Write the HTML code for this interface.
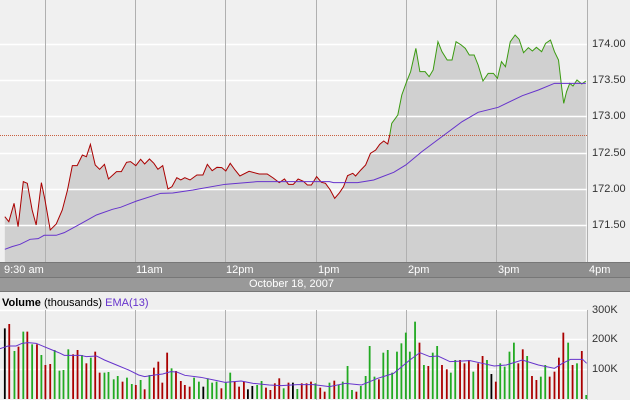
<!DOCTYPE html>
<html><head><meta charset="utf-8"><style>
body{margin:0;width:630px;height:400px;background:#efefef;overflow:hidden;font-family:"Liberation Sans",sans-serif;position:relative}
.t{position:absolute;font-size:11px;color:#333;line-height:12px}
.bar{position:absolute;left:0;width:630px;background:#8e8e8e;color:#fff;font-size:11px}
.bar span{position:absolute;top:1px}
</style></head><body>
<svg width="630" height="400" style="position:absolute;left:0;top:0">
<rect x="0" y="0" width="587" height="262" fill="#f0f0f0"/>
<g transform="scale(0.4018,0.3333)">
<path d="M12,650 22,665 35,610 45,680 58,545 68,550 80,630 90,675 103,548 112,600 125,690 140,672 155,630 168,570 180,497 192,497 205,465 215,470 225,433 237,495 248,508 260,493 270,537 290,515 302,515 315,487 325,485 338,497 350,478 360,492 372,477 383,490 393,508 405,497 418,567 428,560 440,533 450,540 460,533 473,540 490,525 505,525 516,493 528,512 540,502 552,503 562,513 573,490 585,510 597,528 620,514 645,522 665,522 680,534 695,548 708,537 718,553 730,553 742,537 755,544 765,555 775,555 788,530 800,547 810,550 822,570 833,595 845,578 855,560 865,527 878,520 885,528 898,510 910,495 922,460 935,450 945,433 955,423 965,432 975,370 990,345 1000,285 1012,245 1022,215 1035,145 1045,215 1058,215 1068,230 1078,210 1090,125 1100,155 1113,180 1125,180 1135,125 1148,135 1158,145 1168,165 1180,165 1190,195 1202,243 1215,220 1228,220 1238,235 1248,185 1258,200 1270,125 1282,105 1292,118 1303,158 1315,143 1325,153 1335,142 1348,155 1358,130 1370,120 1380,155 1390,180 1398,263 1403,310 1410,275 1418,250 1426,258 1436,240 1448,252 1458,243 L1458,786 L12,786Z" fill="#d0d0d0"/>
</g>
<g stroke="#fff" stroke-width="1.5">
<line x1="0" x2="587" y1="44.5" y2="44.5"/><line x1="0" x2="587" y1="80.5" y2="80.5"/><line x1="0" x2="587" y1="116.5" y2="116.5"/><line x1="0" x2="587" y1="153.5" y2="153.5"/><line x1="0" x2="587" y1="189.5" y2="189.5"/><line x1="0" x2="587" y1="225.5" y2="225.5"/>
<line x1="0" x2="587" y1="339.5" y2="339.5"/><line x1="0" x2="587" y1="369.5" y2="369.5"/><line x1="0" x2="587" y1="310.5" y2="310.5"/>
</g>
<g stroke="#b0b0b0" stroke-width="1">
<line x1="45.5" x2="45.5" y1="0" y2="262"/><line x1="135.5" x2="135.5" y1="0" y2="262"/><line x1="225.5" x2="225.5" y1="0" y2="262"/><line x1="316.5" x2="316.5" y1="0" y2="262"/><line x1="406.5" x2="406.5" y1="0" y2="262"/><line x1="496.5" x2="496.5" y1="0" y2="262"/><line x1="587.5" x2="587.5" y1="0" y2="262"/>
<line x1="45.5" x2="45.5" y1="310" y2="400"/><line x1="135.5" x2="135.5" y1="310" y2="400"/><line x1="225.5" x2="225.5" y1="310" y2="400"/><line x1="316.5" x2="316.5" y1="310" y2="400"/><line x1="406.5" x2="406.5" y1="310" y2="400"/><line x1="496.5" x2="496.5" y1="310" y2="400"/><line x1="587.5" x2="587.5" y1="310" y2="400"/>
</g>
<line x1="0" x2="587" y1="135.5" y2="135.5" stroke="#c86040" stroke-dasharray="1,1"/>
<g transform="scale(0.4018,0.3333)" fill="none" stroke-width="1" vector-effect="non-scaling-stroke">
<path vector-effect="non-scaling-stroke" stroke="#aa0000" d="M12,650 22,665 35,610 45,680 58,545 68,550 80,630 90,675 103,548 112,600 125,690 140,672 155,630 168,570 180,497 192,497 205,465 215,470 225,433 237,495 248,508 260,493 270,537 290,515 302,515 315,487 325,485 338,497 350,478 360,492 372,477 383,490 393,508 405,497 418,567 428,560 440,533 450,540 460,533 473,540 490,525 505,525 516,493 528,512 540,502 552,503 562,513 573,490 585,510 597,528 620,514 645,522 665,522 680,534 695,548 708,537 718,553 730,553 742,537 755,544 765,555 775,555 788,530 800,547 810,550 822,570 833,595 845,578 855,560 865,527 878,520 885,528 898,510 910,495 922,460 935,450 945,433 955,423 965,432 970,405"/>
<path vector-effect="non-scaling-stroke" stroke="#3a9a10" d="M970,405 975,370 990,345 1000,285 1012,245 1022,215 1035,145 1045,215 1058,215 1068,230 1078,210 1090,125 1100,155 1113,180 1125,180 1135,125 1148,135 1158,145 1168,165 1180,165 1190,195 1202,243 1215,220 1228,220 1238,235 1248,185 1258,200 1270,125 1282,105 1292,118 1303,158 1315,143 1325,153 1335,142 1348,155 1358,130 1370,120 1380,155 1390,180 1398,263 1403,310 1410,275 1418,250 1426,258 1436,240 1448,252 1458,243"/>
<path vector-effect="non-scaling-stroke" stroke="#6633cc" d="M12,748 30,740 50,733 75,718 95,716 110,706 140,706 160,698 200,672 240,645 280,628 300,622 340,603 400,580 430,579 480,570 560,553 640,545 820,545 830,548 890,548 930,540 980,517 1010,495 1050,455 1100,410 1150,365 1190,337 1240,322 1300,287 1340,270 1380,250 1458,250"/>
</g>
<g transform="translate(0,250) scale(0.4018,0.3333)" stroke-width="4.5">
<g stroke="#000"><line x1="12" x2="12" y1="235" y2="447"/><line x1="506" x2="506" y1="410" y2="447"/><line x1="617" x2="617" y1="418" y2="447"/><line x1="628" x2="628" y1="408" y2="447"/><line x1="729" x2="729" y1="398" y2="447"/><line x1="1223" x2="1223" y1="372" y2="447"/></g>
<g stroke="#aa0000" id="r"></g><g stroke="#22aa22" id="g"></g>
<path fill="none" stroke="#6633cc" stroke-width="1" vector-effect="non-scaling-stroke" d="M0,296 10,292 20,288 40,288 55,280 70,278 90,280 110,290 130,300 150,310 160,316 200,316 215,320 240,318 260,330 290,345 320,360 345,375 360,380 385,375 405,372 425,365 440,366 460,376 500,382 540,392 560,397 600,393 630,400 670,405 700,407 740,404 780,404 820,410 860,400 900,405 920,395 940,385 980,370 1000,350 1020,330 1045,308 1070,320 1090,318 1120,335 1170,332 1200,340 1230,348 1260,345 1300,330 1340,345 1380,355 1400,340 1420,328 1450,328 1460,340"/>
</g>
</svg>
<div class="bar" style="top:262px;height:14px;border-top:1px solid #777"><span style="left:4px">9:30 am</span><span style="left:136px">11am</span><span style="left:226px">12pm</span><span style="left:318px">1pm</span><span style="left:408px">2pm</span><span style="left:498px">3pm</span><span style="left:589px">4pm</span></div>
<div class="bar" style="top:277px;height:13px;background:#999;border-top:1px solid #777;border-bottom:1px solid #777"><span style="left:249px;top:0">October 18, 2007</span></div>
<div class="t" style="left:2px;top:297px;color:#000"><b>Volume</b> (thousands) <span style="color:#6633cc">EMA(13)</span></div>
<div class="t" style="left:592px;top:38px">174.00</div>
<div class="t" style="left:592px;top:74px">173.50</div>
<div class="t" style="left:592px;top:110px">173.00</div>
<div class="t" style="left:592px;top:147px">172.50</div>
<div class="t" style="left:592px;top:183px">172.00</div>
<div class="t" style="left:592px;top:219px">171.50</div>
<div class="t" style="left:592px;top:304px">300K</div>
<div class="t" style="left:592px;top:333px">200K</div>
<div class="t" style="left:592px;top:363px">100K</div>
<script>
var R=[[23,222],[46,290],[68,245],[92,283],[113,345],[125,342],[182,313],[193,300],[215,340],[237,305],[248,368],[305,395],[338,405],[360,418],[383,353],[394,335],[404,398],[416,308],[438,363],[450,393],[460,405],[472,410],[551,415],[584,395],[595,410],[607,395],[662,413],[673,420],[684,400],[695,385],[718,398],[751,400],[763,400],[774,395],[797,413],[808,425],[832,392],[887,425],[943,388],[1044,278],[1066,348],[1100,345],[1112,358],[1145,330],[1156,340],[1167,330],[1190,340],[1201,318],[1234,395],[1290,340],[1301,298],[1324,378],[1335,390],[1368,380],[1380,365],[1391,323],[1402,248],[1425,345],[1448,303]];
var G=[[36,303],[58,245],[80,283],[103,315],[136,300],[148,362],[158,360],[170,298],[204,315],[226,323],[260,368],[270,366],[283,388],[293,378],[316,383],[328,402],[350,390],[372,375],[427,355],[483,383],[495,395],[517,385],[528,398],[539,395],[562,398],[573,368],[640,405],[651,393],[706,415],[740,417],[785,400],[820,398],[843,405],[853,395],[865,348],[876,420],[898,408],[910,378],[920,288],[932,380],[954,308],[965,300],[976,368],[988,305],[999,280],[1010,248],[1020,305],[1033,215],[1055,345],[1077,308],[1088,288],[1122,368],[1133,330],[1178,365],[1212,330],[1245,340],[1256,350],[1268,305],[1279,278],[1312,318],[1346,380],[1357,345],[1414,278],[1436,340],[1459,435]];
function add(id,a){var g=document.getElementById(id),s='';a.forEach(function(p){s+='<line x1="'+p[0]+'" x2="'+p[0]+'" y1="'+p[1]+'" y2="447"/>';});g.innerHTML=s;}
add('r',R);add('g',G);
</script>
</body></html>
